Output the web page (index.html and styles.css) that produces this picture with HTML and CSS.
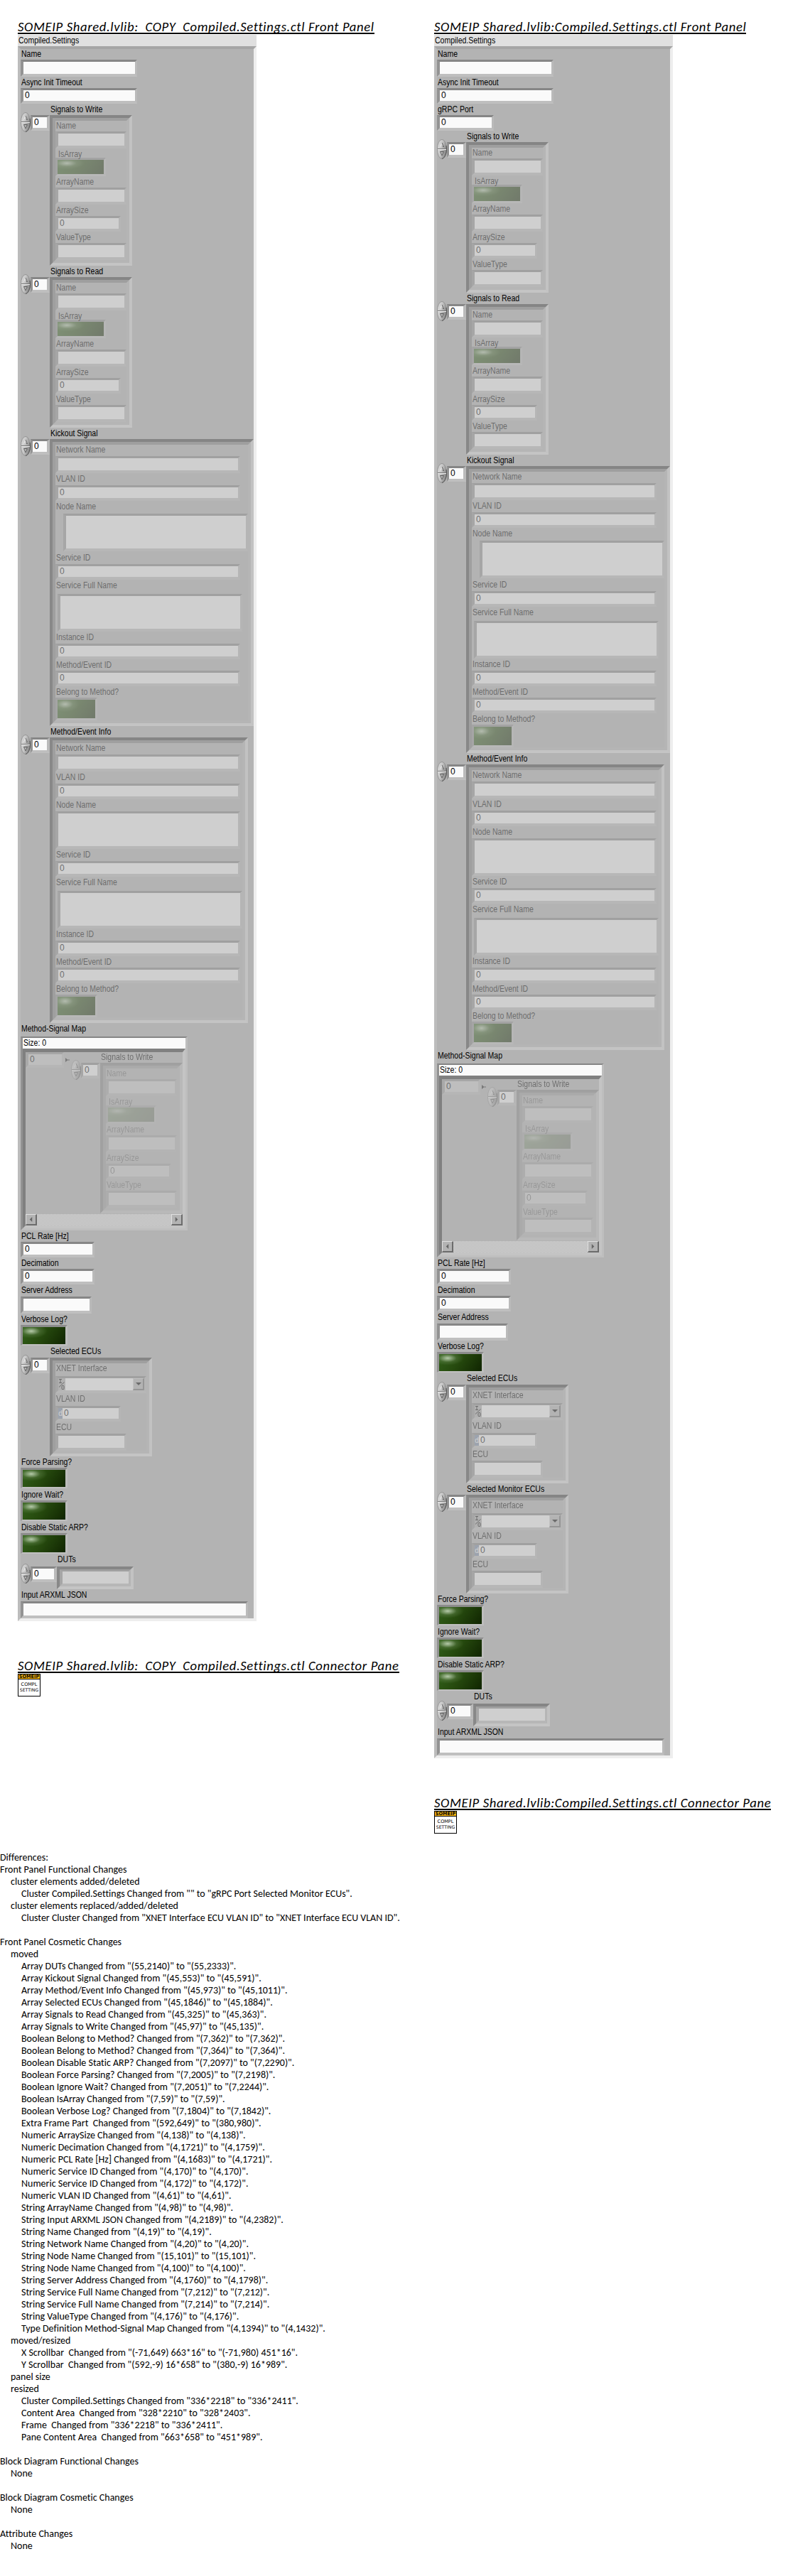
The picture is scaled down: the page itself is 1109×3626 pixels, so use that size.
FILE: index.html
```html
<!DOCTYPE html>
<html lang="en">
<head>
<meta charset="utf-8">
<title>Compiled.Settings.ctl differences</title>
<link rel="stylesheet" href="styles.css">
</head>
<body>
<svg class="defs" width="0" height="0" aria-hidden="true">
  <defs>
    <linearGradient id="knob" x1="0" y1="0" x2="1" y2="0.35">
      <stop offset="0" stop-color="#dcdcdc"/><stop offset="0.5" stop-color="#c8c8c8"/><stop offset="1" stop-color="#8a8a8a"/>
    </linearGradient>
    <symbol id="spin" viewBox="0 0 14 28">
      <ellipse cx="7" cy="14" rx="6.6" ry="13.6" fill="url(#knob)" stroke="#8c8c8c" stroke-width="0.8"/>
      <path d="M13 9 Q14.2 14 13 19 Q11 26.500 7 27.500" fill="none" stroke="#555" stroke-width="1"/>
      <path d="M1 13.500H13" stroke="#777"/><path d="M1 14.500H13" stroke="#eee"/>
      <path d="M4.500 10.500 L7 5 L9.500 10.500" fill="none" stroke="#eee"/><path d="M7 5 L9.500 10.500 H8" fill="none" stroke="#555"/>
      <path d="M9.500 17.500 L7 23 L4.500 17.500" fill="none" stroke="#666"/><path d="M4.500 17.500H9.500" stroke="#555"/>
    </symbol>
    <symbol id="io" viewBox="0 0 9 17">
      <path d="M1 1.500H5M3 1.500V6.500M1 6.500H5M1 12.500L8.500 5.500" fill="none" stroke="#000"/>
      <rect x="5" y="10.500" width="3" height="5" rx="1" fill="none" stroke="#000"/>
    </symbol>
  </defs>
</svg>

<main class="compare">
<section class="side">
  <h2 class="heading">SOMEIP Shared.lvlib:&nbsp; COPY&nbsp; Compiled.Settings.ctl Front Panel</h2>
  <div class="title"><span>Compiled.Settings</span></div>
  <div class="frame">
    <div class="item"><div class="label">Name</div><div class="field str w164"></div></div>
    <div class="item"><div class="label">Async Init Timeout</div><div class="field w164">0</div></div>
    <div class="item"><div class="label in">Signals to Write</div>
      <div class="array"><svg class="spin"><use href="#spin"/></svg><div class="field index">0</div>
        <div class="bevel"><div class="cell signals">
          <div class="item"><div class="label">Name</div><div class="field str w100"></div></div>
          <div class="item over"><div class="label">IsArray</div><div class="led led-a"></div></div>
          <div class="item"><div class="label">ArrayName</div><div class="field str w100"></div></div>
          <div class="item"><div class="label">ArraySize</div><div class="field w92">0</div></div>
          <div class="item"><div class="label">ValueType</div><div class="field str w100"></div></div>
        </div></div></div></div>
    <div class="item"><div class="label in">Signals to Read</div>
      <div class="array"><svg class="spin"><use href="#spin"/></svg><div class="field index">0</div>
        <div class="bevel"><div class="cell signals">
          <div class="item"><div class="label">Name</div><div class="field str w100"></div></div>
          <div class="item over"><div class="label">IsArray</div><div class="led led-a"></div></div>
          <div class="item"><div class="label">ArrayName</div><div class="field str w100"></div></div>
          <div class="item"><div class="label">ArraySize</div><div class="field w92">0</div></div>
          <div class="item"><div class="label">ValueType</div><div class="field str w100"></div></div>
        </div></div></div></div>
    <div class="item"><div class="label in">Kickout Signal</div>
      <div class="array"><svg class="spin"><use href="#spin"/></svg><div class="field index">0</div>
        <div class="bevel"><div class="cell kickout">
          <div class="item s1"><div class="label">Network Name</div><div class="field str w260"></div></div>
          <div class="item s1"><div class="label">VLAN ID</div><div class="field w260">0</div></div>
          <div class="item s2"><div class="label">Node Name</div><div class="field area shift"></div></div>
          <div class="item t1 s1"><div class="label">Service ID</div><div class="field w260">0</div></div>
          <div class="item s4"><div class="label">Service Full Name</div><div class="field area nudge"></div></div>
          <div class="item s1"><div class="label">Instance ID</div><div class="field w260">0</div></div>
          <div class="item"><div class="label">Method/Event ID</div><div class="field w260">0</div></div>
          <div class="item"><div class="label">Belong to Method?</div><div class="led led-b"></div></div>
        </div></div></div></div>
    <div class="item"><div class="label in">Method/Event Info</div>
      <div class="array"><svg class="spin"><use href="#spin"/></svg><div class="field index">0</div>
        <div class="bevel"><div class="cell method">
          <div class="item s1"><div class="label">Network Name</div><div class="field str w260"></div></div>
          <div class="item s1"><div class="label">VLAN ID</div><div class="field w260">0</div></div>
          <div class="item s1"><div class="label">Node Name</div><div class="field area"></div></div>
          <div class="item s1"><div class="label">Service ID</div><div class="field w260">0</div></div>
          <div class="item s4"><div class="label">Service Full Name</div><div class="field area nudge"></div></div>
          <div class="item s1"><div class="label">Instance ID</div><div class="field w260">0</div></div>
          <div class="item"><div class="label">Method/Event ID</div><div class="field w260">0</div></div>
          <div class="item"><div class="label">Belong to Method?</div><div class="led led-b"></div></div>
        </div></div></div></div>
    <div class="item s3"><div class="label">Method-Signal Map</div>
      <div class="map"><div class="size"><span>Size: 0</span></div>
        <div class="map-body">
          <div class="pair">
            <div class="field key">0</div>
            <svg class="arrow" viewBox="0 0 6 6"><path d="M0 0V6L3 3.500H6V2.500H3Z"/></svg>
            <div class="item"><div class="label in">Signals to Write</div>
              <div class="array"><svg class="spin"><use href="#spin"/></svg><div class="field index">0</div>
                <div class="bevel"><div class="cell signals">
                  <div class="item"><div class="label">Name</div><div class="field str w100"></div></div>
                  <div class="item over"><div class="label">IsArray</div><div class="led led-a"></div></div>
                  <div class="item"><div class="label">ArrayName</div><div class="field str w100"></div></div>
                  <div class="item"><div class="label">ArraySize</div><div class="field w92">0</div></div>
                  <div class="item"><div class="label">ValueType</div><div class="field str w100"></div></div>
                </div></div></div></div>
          </div>
          <div class="scroll"><div class="btn"><svg viewBox="0 0 8 8"><path d="M6 0V8L2 4Z"/></svg></div><div class="btn"><svg viewBox="0 0 8 8"><path d="M2 0V8L6 4Z"/></svg></div></div>
        </div></div></div>
    <div class="item"><div class="label">PCL Rate [Hz]</div><div class="field w104">0</div></div>
    <div class="item"><div class="label">Decimation</div><div class="field w104">0</div></div>
    <div class="item s1"><div class="label">Server Address</div><div class="field str w100"></div></div>
    <div class="item"><div class="label">Verbose Log?</div><div class="led"></div></div>
    <div class="item s1"><div class="label in">Selected ECUs</div>
      <div class="array"><svg class="spin"><use href="#spin"/></svg><div class="field index">0</div>
        <div class="bevel"><div class="cell ecus">
          <div class="item s3"><div class="label">XNET Interface</div><div class="field io"><svg class="io-mark"><use href="#io"/></svg><div class="io-text"></div><div class="io-btn"><svg viewBox="0 0 8 4"><path d="M0 0H8L4 4Z"/></svg></div></div></div>
          <div class="item s2"><div class="label">VLAN ID</div><div class="field radix w92"><span class="d">d</span>0</div></div>
          <div class="item s1"><div class="label">ECU</div><div class="field str w100"></div></div>
        </div></div></div></div>
    <div class="item"><div class="label">Force Parsing?</div><div class="led"></div></div>
    <div class="item t1"><div class="label">Ignore Wait?</div><div class="led"></div></div>
    <div class="item t1"><div class="label">Disable Static ARP?</div><div class="led"></div></div>
    <div class="item s2"><div class="label in duts">DUTs</div>
      <div class="array"><svg class="spin"><use href="#spin"/></svg><div class="field index wide">0</div>
        <div class="bevel"><div class="field str w100 dim"></div></div></div></div>
    <div class="item s1"><div class="label">Input ARXML JSON</div><div class="field str w320"></div></div>
  </div>
  <h2 class="heading pane">SOMEIP Shared.lvlib:&nbsp; COPY&nbsp; Compiled.Settings.ctl Connector Pane</h2>
  <div class="icon"><div class="band">SOMEIP</div><div class="l1">COMPL</div><div class="l2">SETTING</div></div>
</section>

<section class="side">
  <h2 class="heading">SOMEIP Shared.lvlib:Compiled.Settings.ctl Front Panel</h2>
  <div class="title"><span>Compiled.Settings</span></div>
  <div class="frame">
    <div class="item"><div class="label">Name</div><div class="field str w164"></div></div>
    <div class="item"><div class="label">Async Init Timeout</div><div class="field w164">0</div></div>
    <div class="item"><div class="label">gRPC Port</div><div class="field w80">0</div></div>
    <div class="item"><div class="label in">Signals to Write</div>
      <div class="array"><svg class="spin"><use href="#spin"/></svg><div class="field index">0</div>
        <div class="bevel"><div class="cell signals">
          <div class="item"><div class="label">Name</div><div class="field str w100"></div></div>
          <div class="item over"><div class="label">IsArray</div><div class="led led-a"></div></div>
          <div class="item"><div class="label">ArrayName</div><div class="field str w100"></div></div>
          <div class="item"><div class="label">ArraySize</div><div class="field w92">0</div></div>
          <div class="item"><div class="label">ValueType</div><div class="field str w100"></div></div>
        </div></div></div></div>
    <div class="item"><div class="label in">Signals to Read</div>
      <div class="array"><svg class="spin"><use href="#spin"/></svg><div class="field index">0</div>
        <div class="bevel"><div class="cell signals">
          <div class="item"><div class="label">Name</div><div class="field str w100"></div></div>
          <div class="item over"><div class="label">IsArray</div><div class="led led-a"></div></div>
          <div class="item"><div class="label">ArrayName</div><div class="field str w100"></div></div>
          <div class="item"><div class="label">ArraySize</div><div class="field w92">0</div></div>
          <div class="item"><div class="label">ValueType</div><div class="field str w100"></div></div>
        </div></div></div></div>
    <div class="item"><div class="label in">Kickout Signal</div>
      <div class="array"><svg class="spin"><use href="#spin"/></svg><div class="field index">0</div>
        <div class="bevel"><div class="cell kickout">
          <div class="item s1"><div class="label">Network Name</div><div class="field str w260"></div></div>
          <div class="item s1"><div class="label">VLAN ID</div><div class="field w260">0</div></div>
          <div class="item s2"><div class="label">Node Name</div><div class="field area shift"></div></div>
          <div class="item t1 s1"><div class="label">Service ID</div><div class="field w260">0</div></div>
          <div class="item s4"><div class="label">Service Full Name</div><div class="field area nudge"></div></div>
          <div class="item s1"><div class="label">Instance ID</div><div class="field w260">0</div></div>
          <div class="item"><div class="label">Method/Event ID</div><div class="field w260">0</div></div>
          <div class="item"><div class="label">Belong to Method?</div><div class="led led-b"></div></div>
        </div></div></div></div>
    <div class="item"><div class="label in">Method/Event Info</div>
      <div class="array"><svg class="spin"><use href="#spin"/></svg><div class="field index">0</div>
        <div class="bevel"><div class="cell method">
          <div class="item s1"><div class="label">Network Name</div><div class="field str w260"></div></div>
          <div class="item s1"><div class="label">VLAN ID</div><div class="field w260">0</div></div>
          <div class="item s1"><div class="label">Node Name</div><div class="field area"></div></div>
          <div class="item s1"><div class="label">Service ID</div><div class="field w260">0</div></div>
          <div class="item s4"><div class="label">Service Full Name</div><div class="field area nudge"></div></div>
          <div class="item s1"><div class="label">Instance ID</div><div class="field w260">0</div></div>
          <div class="item"><div class="label">Method/Event ID</div><div class="field w260">0</div></div>
          <div class="item"><div class="label">Belong to Method?</div><div class="led led-b"></div></div>
        </div></div></div></div>
    <div class="item s3"><div class="label">Method-Signal Map</div>
      <div class="map"><div class="size"><span>Size: 0</span></div>
        <div class="map-body">
          <div class="pair">
            <div class="field key">0</div>
            <svg class="arrow" viewBox="0 0 6 6"><path d="M0 0V6L3 3.500H6V2.500H3Z"/></svg>
            <div class="item"><div class="label in">Signals to Write</div>
              <div class="array"><svg class="spin"><use href="#spin"/></svg><div class="field index">0</div>
                <div class="bevel"><div class="cell signals">
                  <div class="item"><div class="label">Name</div><div class="field str w100"></div></div>
                  <div class="item over"><div class="label">IsArray</div><div class="led led-a"></div></div>
                  <div class="item"><div class="label">ArrayName</div><div class="field str w100"></div></div>
                  <div class="item"><div class="label">ArraySize</div><div class="field w92">0</div></div>
                  <div class="item"><div class="label">ValueType</div><div class="field str w100"></div></div>
                </div></div></div></div>
          </div>
          <div class="scroll"><div class="btn"><svg viewBox="0 0 8 8"><path d="M6 0V8L2 4Z"/></svg></div><div class="btn"><svg viewBox="0 0 8 8"><path d="M2 0V8L6 4Z"/></svg></div></div>
        </div></div></div>
    <div class="item"><div class="label">PCL Rate [Hz]</div><div class="field w104">0</div></div>
    <div class="item"><div class="label">Decimation</div><div class="field w104">0</div></div>
    <div class="item s1"><div class="label">Server Address</div><div class="field str w100"></div></div>
    <div class="item"><div class="label">Verbose Log?</div><div class="led"></div></div>
    <div class="item s1"><div class="label in">Selected ECUs</div>
      <div class="array"><svg class="spin"><use href="#spin"/></svg><div class="field index">0</div>
        <div class="bevel"><div class="cell ecus">
          <div class="item s3"><div class="label">XNET Interface</div><div class="field io"><svg class="io-mark"><use href="#io"/></svg><div class="io-text"></div><div class="io-btn"><svg viewBox="0 0 8 4"><path d="M0 0H8L4 4Z"/></svg></div></div></div>
          <div class="item s2"><div class="label">VLAN ID</div><div class="field radix w92"><span class="d">d</span>0</div></div>
          <div class="item s1"><div class="label">ECU</div><div class="field str w100"></div></div>
        </div></div></div></div>
    <div class="item"><div class="label in">Selected Monitor ECUs</div>
      <div class="array"><svg class="spin"><use href="#spin"/></svg><div class="field index">0</div>
        <div class="bevel"><div class="cell ecus">
          <div class="item s3"><div class="label">XNET Interface</div><div class="field io"><svg class="io-mark"><use href="#io"/></svg><div class="io-text"></div><div class="io-btn"><svg viewBox="0 0 8 4"><path d="M0 0H8L4 4Z"/></svg></div></div></div>
          <div class="item s2"><div class="label">VLAN ID</div><div class="field radix w92"><span class="d">d</span>0</div></div>
          <div class="item s1"><div class="label">ECU</div><div class="field str w100"></div></div>
        </div></div></div></div>
    <div class="item"><div class="label">Force Parsing?</div><div class="led"></div></div>
    <div class="item t1"><div class="label">Ignore Wait?</div><div class="led"></div></div>
    <div class="item t1"><div class="label">Disable Static ARP?</div><div class="led"></div></div>
    <div class="item s2"><div class="label in duts">DUTs</div>
      <div class="array"><svg class="spin"><use href="#spin"/></svg><div class="field index wide">0</div>
        <div class="bevel"><div class="field str w100 dim"></div></div></div></div>
    <div class="item s1"><div class="label">Input ARXML JSON</div><div class="field str w320"></div></div>
  </div>
  <h2 class="heading pane">SOMEIP Shared.lvlib:Compiled.Settings.ctl Connector Pane</h2>
  <div class="icon"><div class="band">SOMEIP</div><div class="l1">COMPL</div><div class="l2">SETTING</div></div>
</section>
</main>

<section class="report">
  <p>Differences:</p>
  <p>Front Panel Functional Changes</p>
  <p class="i1">cluster elements added/deleted</p>
  <p class="i2">Cluster Compiled.Settings Changed from "" to "gRPC Port Selected Monitor ECUs".</p>
  <p class="i1">cluster elements replaced/added/deleted</p>
  <p class="i2">Cluster Cluster Changed from "XNET Interface ECU VLAN ID" to "XNET Interface ECU VLAN ID".</p>
  <p class="top">Front Panel Cosmetic Changes</p>
  <p class="i1">moved</p>
  <p class="i2">Array DUTs Changed from "(55,2140)" to "(55,2333)".</p>
  <p class="i2">Array Kickout Signal Changed from "(45,553)" to "(45,591)".</p>
  <p class="i2">Array Method/Event Info Changed from "(45,973)" to "(45,1011)".</p>
  <p class="i2">Array Selected ECUs Changed from "(45,1846)" to "(45,1884)".</p>
  <p class="i2">Array Signals to Read Changed from "(45,325)" to "(45,363)".</p>
  <p class="i2">Array Signals to Write Changed from "(45,97)" to "(45,135)".</p>
  <p class="i2">Boolean Belong to Method? Changed from "(7,362)" to "(7,362)".</p>
  <p class="i2">Boolean Belong to Method? Changed from "(7,364)" to "(7,364)".</p>
  <p class="i2">Boolean Disable Static ARP? Changed from "(7,2097)" to "(7,2290)".</p>
  <p class="i2">Boolean Force Parsing? Changed from "(7,2005)" to "(7,2198)".</p>
  <p class="i2">Boolean Ignore Wait? Changed from "(7,2051)" to "(7,2244)".</p>
  <p class="i2">Boolean IsArray Changed from "(7,59)" to "(7,59)".</p>
  <p class="i2">Boolean Verbose Log? Changed from "(7,1804)" to "(7,1842)".</p>
  <p class="i2">Extra Frame Part  Changed from "(592,649)" to "(380,980)".</p>
  <p class="i2">Numeric ArraySize Changed from "(4,138)" to "(4,138)".</p>
  <p class="i2">Numeric Decimation Changed from "(4,1721)" to "(4,1759)".</p>
  <p class="i2">Numeric PCL Rate [Hz] Changed from "(4,1683)" to "(4,1721)".</p>
  <p class="i2">Numeric Service ID Changed from "(4,170)" to "(4,170)".</p>
  <p class="i2">Numeric Service ID Changed from "(4,172)" to "(4,172)".</p>
  <p class="i2">Numeric VLAN ID Changed from "(4,61)" to "(4,61)".</p>
  <p class="i2">String ArrayName Changed from "(4,98)" to "(4,98)".</p>
  <p class="i2">String Input ARXML JSON Changed from "(4,2189)" to "(4,2382)".</p>
  <p class="i2">String Name Changed from "(4,19)" to "(4,19)".</p>
  <p class="i2">String Network Name Changed from "(4,20)" to "(4,20)".</p>
  <p class="i2">String Node Name Changed from "(15,101)" to "(15,101)".</p>
  <p class="i2">String Node Name Changed from "(4,100)" to "(4,100)".</p>
  <p class="i2">String Server Address Changed from "(4,1760)" to "(4,1798)".</p>
  <p class="i2">String Service Full Name Changed from "(7,212)" to "(7,212)".</p>
  <p class="i2">String Service Full Name Changed from "(7,214)" to "(7,214)".</p>
  <p class="i2">String ValueType Changed from "(4,176)" to "(4,176)".</p>
  <p class="i2">Type Definition Method-Signal Map Changed from "(4,1394)" to "(4,1432)".</p>
  <p class="i1">moved/resized</p>
  <p class="i2">X Scrollbar  Changed from "(-71,649) 663*16" to "(-71,980) 451*16".</p>
  <p class="i2">Y Scrollbar  Changed from "(592,-9) 16*658" to "(380,-9) 16*989".</p>
  <p class="i1">panel size</p>
  <p class="i1">resized</p>
  <p class="i2">Cluster Compiled.Settings Changed from "336*2218" to "336*2411".</p>
  <p class="i2">Content Area  Changed from "328*2210" to "328*2403".</p>
  <p class="i2">Frame  Changed from "336*2218" to "336*2411".</p>
  <p class="i2">Pane Content Area  Changed from "663*658" to "451*989".</p>
  <p class="top">Block Diagram Functional Changes</p>
  <p class="i1">None</p>
  <p class="top">Block Diagram Cosmetic Changes</p>
  <p class="i1">None</p>
  <p class="top">Attribute Changes</p>
  <p class="i1">None</p>
</section>
</body>
</html>
```
FILE: styles.css
```css
* { box-sizing: border-box; }
body { margin: 0; background: #fff; color: #000; font: 12px/15px "Liberation Sans", Arial, sans-serif; }
.defs { display: block; }
.compare { display: grid; grid-template-columns: 586px 1fr; padding: 26px 0 0 25px; height: 2606px; }
.side { display: flex; flex-direction: column; align-items: flex-start; min-width: 0; }

.heading { margin: 0; height: 22px; overflow: hidden; border-bottom: 2px solid #000;
  font: italic 400 18.67px/24px Carlito, Calibri, Lato, sans-serif; letter-spacing: 0.63px; white-space: nowrap; }
.heading.pane { margin-top: 51px; }

/* narrow panel lettering */
.label, .title span, .size span { display: block; font-size: 12.5px; line-height: 14px; white-space: nowrap;
  transform: scaleX(0.84); transform-origin: 0 0; }

.title { width: 336px; height: 16px; margin-top: 1px; padding: 1px 0 0 1px; background: #e0e0e0; }

/* raised outer cluster */
.frame { width: 336px; display: flex; flex-direction: column; align-items: flex-start; gap: 1px;
  background: #b3b3b3; border: 4px solid; border-color: #a6a6a6 #eee #eee #bcbcbc; }

.item { display: flex; flex-direction: column; align-items: flex-start; }
.label { height: 15px; margin-left: 1px; }
.label.in { margin-left: 42px; }
.label.duts { margin-left: 52px; }
.t1 { margin-top: 1px; }
.s1 > :last-child { margin-top: 1px; }
.s2 > :last-child { margin-top: 2px; }
.s3 > :last-child { margin-top: 3px; }
.s4 > :last-child { margin-top: 4px; }

/* sunken value boxes */
.field { height: 22px; padding-left: 2px; background: #fafafa; border: solid; border-width: 3px 3px 4px 4px;
  border-color: #868686 #bababa #bfbfbf #939393; }
.str { height: 24px; }
.area { width: 260px; height: 53px; }
.shift { margin-left: 11px; }
.nudge { margin-left: 3px; }
.w80 { width: 80px; }
.w92 { width: 92px; }
.w100 { width: 100px; }
.w104 { width: 104px; }
.w164 { width: 164px; }
.w260 { width: 260px; }
.w320 { width: 320px; }
.index { width: 27px; border-left-width: 3px; border-right-width: 4px; }
.index.wide { width: 37px; }

/* array container: spinner, index, element frame */
.array { display: flex; align-items: flex-start; }
.spin { display: block; width: 14px; height: 28px; margin: -4px 0 -24px; }
.bevel { border: 4px solid; border-color: #858585 #c2c2c2 #c4c4c4 #888; }
.cell { display: flex; flex-direction: column; align-items: flex-start; gap: 1px; opacity: 0.4;
  border: 4px solid; border-color: #828282 #b8b8b8 #b8b8b8 #828282; }
.signals { width: 108px; }
.signals .over .label { margin-left: 4px; }
.kickout { width: 279px; }
.method { width: 271px; }
.ecus { width: 136px; }
.dim { opacity: 0.4; }

.led { width: 66px; height: 29px; border: solid; border-width: 3px 3px 2px; border-color: #8c8c8c #bcbcbc #c0c0c0 #929292;
  background: radial-gradient(ellipse 38% 42% at 20% 24%, rgba(205, 222, 195, 0.85), rgba(120, 150, 100, 0.3) 55%, transparent),
    linear-gradient(125deg, #31601a, #264a0e 45%, #122802 95%); background-origin: padding-box; }
.led-a { width: 71px; height: 26px; border-bottom-width: 3px; }
.led-b { width: 59px; height: 32px; border-bottom-width: 3px; }
.over > .led { margin-top: -3px; }

/* map container */
.map { width: 235px; height: 273px; border: solid; border-width: 2px 3px 3px; border-color: #858585 #bebebe #bfbfbf #929292; }
.size { height: 15px; padding-left: 1px; background: #fafafa; }
.map-body { height: 253px; border: solid; border-width: 5px 4px 4px; border-color: #808080 #c4c4c4 #c4c4c4 #808080; }
.pair { display: flex; height: 228px; opacity: 0.4; }
.key { width: 54px; background: #d0d0d0; border-color: #959595 #b9b9b9 #bbb #9c9c9c; }
.arrow { width: 6px; height: 6px; margin: 8px 2px 0; fill: #222; }
.scroll { display: flex; justify-content: space-between; height: 16px; background: repeating-conic-gradient(#b3b3b3 0 25%, #d8d8d8 0 50%) 0 0 / 2px 2px; }
.btn { width: 16px; height: 16px; display: flex; align-items: center; justify-content: center; background: #b3b3b3;
  border: solid; border-width: 1px 2px 2px 1px; border-color: #e0e0e0 #6c6c6c #6c6c6c #e0e0e0; }
.btn svg { width: 7px; height: 7px; fill: #666; }

/* XNET selector */
.io { width: 128px; height: 24px; display: flex; padding: 0; background: #b0b0b0; }
.io-mark { width: 9px; height: 17px; margin-right: 1px; }
.io-text { flex: 1; background: #fff; }
.io-btn { width: 16px; display: flex; align-items: center; justify-content: center; background: #b3b3b3;
  border: solid; border-width: 1px 2px 2px 1px; border-color: #d8d8d8 #6c6c6c #6c6c6c #d8d8d8; }
.io-btn svg { width: 8px; height: 4px; }
.radix { display: flex; gap: 2px; padding: 0; }
.d { width: 6px; background: #7a8ca8; color: #fff; font-size: 10px; line-height: 15px; text-align: center; }

/* connector icon */
.icon { width: 32px; height: 32px; margin-top: 1px; border: 1px solid #000; background: #fff; overflow: hidden;
  font: 400 6.5px/8px "DejaVu Sans", sans-serif; text-align: center; white-space: nowrap; }
.band { height: 7px; background: #fdb813; border-bottom: 1px solid #000; font-weight: 700; line-height: 6px; }
.l1 { margin-top: 3px; }
.l2 { font-size: 6.2px; }

.report { font: 14px/17px Carlito, Calibri, Lato, sans-serif; font-variant-ligatures: none; }
.report p { margin: 0; white-space: pre; }
.report .top { margin-top: 17px; }
.report .i1 { padding-left: 15px; }
.report .i2 { padding-left: 30px; }
```
